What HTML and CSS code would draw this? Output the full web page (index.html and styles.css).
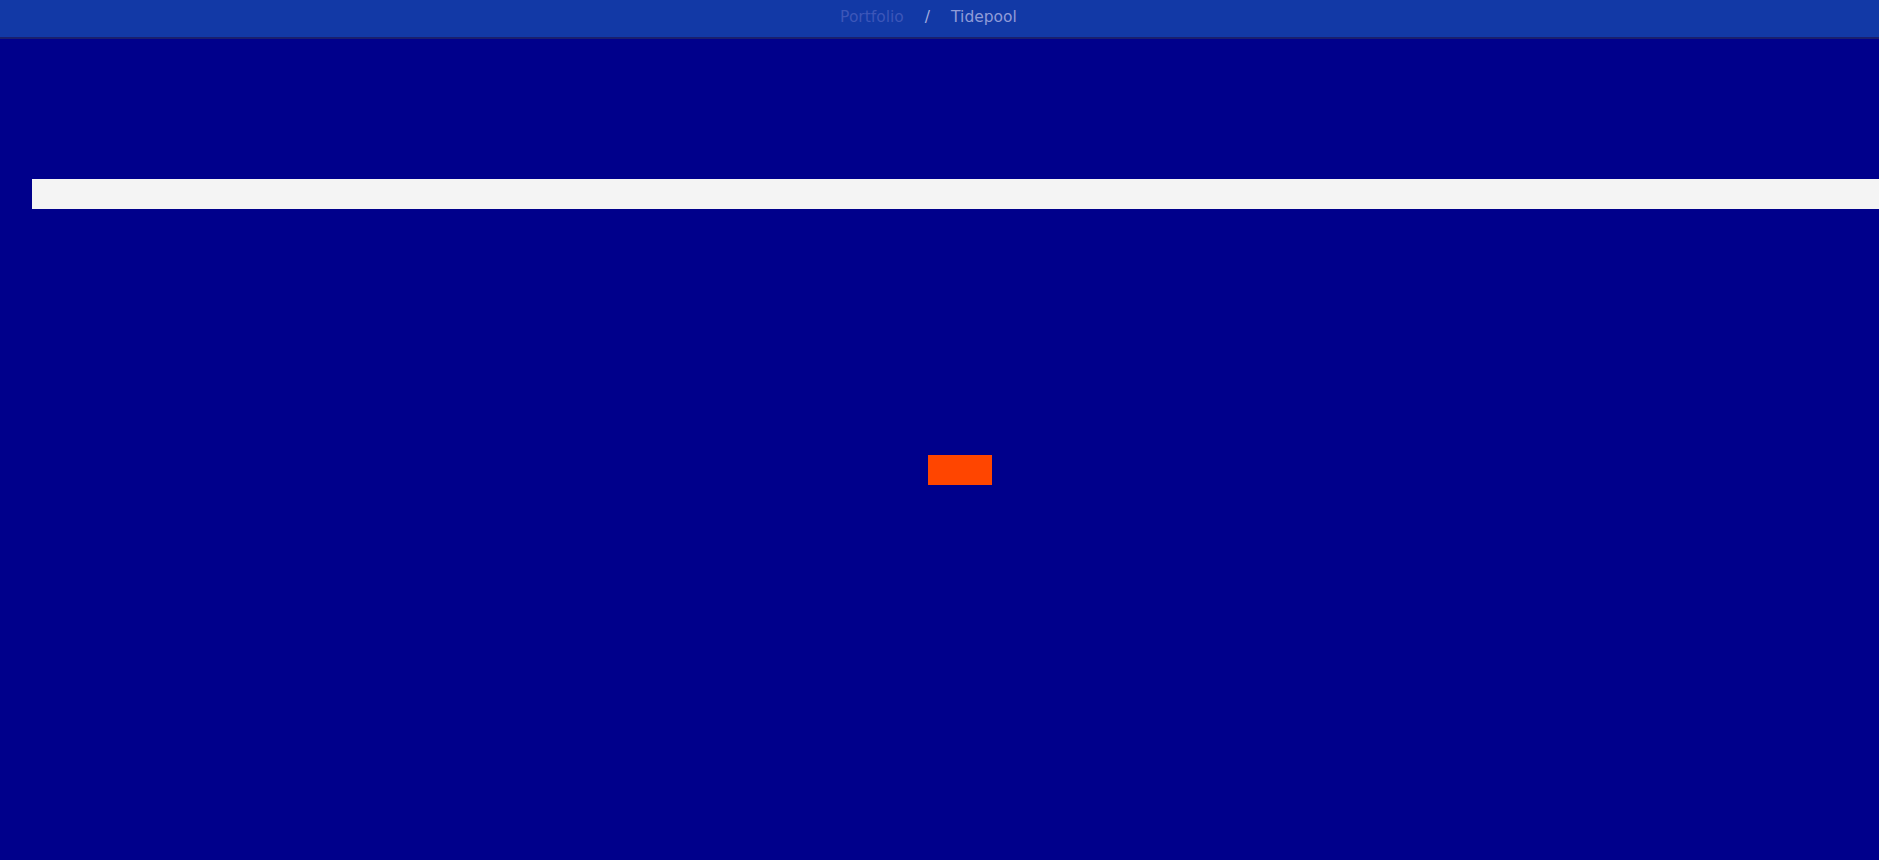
FILE: index.html
```html
<!DOCTYPE html>
<html>
<head>
<meta charset="utf-8">
<link rel="stylesheet" href="styles.css">
</head>
<body>
<header class="topbar">
  <nav class="crumbs">
    <span class="crumb-dim">Portfolio</span>
    <span class="crumb-sep">/</span>
    <span class="crumb-cur">Tidepool</span>
  </nav>
</header>
<main class="stage">
  <div class="bar"></div>
  <div class="center-row"><div class="chip"></div></div>
</main>
</body>
</html>
```
FILE: styles.css
```css
html, body {
  margin: 0;
  padding: 0;
  overflow: hidden;
  background: #00008b;
  height: 100%;
}
.topbar {
  height: 37px;
  background: #1239a6;
  border-bottom: 2px solid #1a1f6e;
  display: flex;
  align-items: center;
  justify-content: center;
  font-family: "DejaVu Sans", Verdana, sans-serif;
  font-size: 15.5px;
}
.crumbs {
  display: flex;
  align-items: center;
  gap: 21px;
  margin-left: -22px;
  padding-bottom: 3px;
}
.crumb-dim { color: #3c56b9; }
.crumb-sep { color: #a3acdf; }
.crumb-cur { color: #8f9bd8; }
.stage {
  margin-left: 32px;
  width: 1856px;
  padding-top: 140px;
}
.bar {
  height: 30px;
  background: #f4f4f4;
}
.center-row {
  display: flex;
  justify-content: center;
  padding-top: 246px;
}
.chip {
  width: 64px;
  height: 30px;
  background: #ff4500;
}
```
